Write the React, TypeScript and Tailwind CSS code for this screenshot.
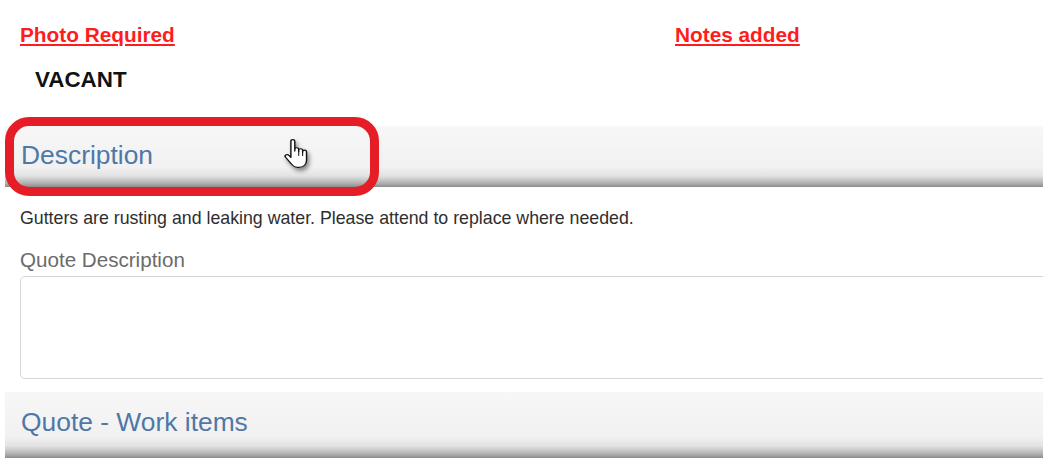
import React from 'react';

const bandBg =
  'bg-[linear-gradient(to_bottom,#f7f7f8_0%,#f1f1f2_68%,#e2e2e3_82%,#b4b4b4_93%,#8c8c8c_100%)]';

function HandCursor() {
  return (
    <svg
      width="32"
      height="33"
      viewBox="0 0 18 23"
      preserveAspectRatio="none"
      className="drop-shadow-[2px_3px_2px_rgba(0,0,0,0.45)]"
    >
      <path
        d="M5 12.5V2.2a1.1 1.1 0 0 1 2.2 0V9V7.9a1.1 1.1 0 0 1 2.2 0V9.4V8.6a1.1 1.1 0 0 1 2.2 0V10V9.5a1.1 1.1 0 0 1 2.2 0V15.5c0 3-1.8 5-4.6 5H9.3c-1.9 0-3-0.9-4-2.4L2 13.4a1.1 1.1 0 0 1 1.7-1.4L5 13.5Z"
        fill="#fff"
        stroke="#111"
        strokeWidth="0.8"
        strokeLinejoin="round"
      />
      <path d="M9.4 9.4v3M11.6 10v2.6" stroke="#111" strokeWidth="0.6" />
    </svg>
  );
}

export default function App() {
  return (
    <div className="relative h-[458px] w-full overflow-hidden bg-white font-['Liberation_Sans',Arial,sans-serif]">
      <div className="flex px-5 pt-[25px] text-[20.8px] font-bold leading-none text-[#ff1c1c] underline underline-offset-2">
        <span className="w-[655px]">Photo Required</span>
        <span>Notes added</span>
      </div>

      <div className="mt-[23.5px] pl-[35px] text-[22.4px] font-bold leading-none text-[#111]">VACANT</div>

      <div className={`ml-[5px] mt-[34px] h-[61px] pl-4 pt-[16px] ${bandBg}`}>
        <h2 className="text-[26.4px] leading-none text-[#4f78a6]">Description</h2>
      </div>

      <p className="mt-[23px] pl-5 text-[17.75px] leading-none text-[#2e2e2e]">
        Gutters are rusting and leaking water. Please attend to replace where needed.
      </p>

      <div className="mt-[23px] pl-5 text-[20.6px] leading-none text-[#6b6b6b]">Quote Description</div>

      <div className="ml-5 mr-[-20px] mt-[5px] h-[103px] rounded-[5px] border border-[#d6d6d6] bg-white" />

      <div className={`ml-[5px] mt-[13px] h-[66px] pl-4 pt-[17px] ${bandBg}`}>
        <h2 className="text-[26.4px] leading-none text-[#4f78a6]">Quote - Work items</h2>
      </div>

      <div className="absolute left-[5px] top-[117px] h-[79px] w-[374px] rounded-[24px] border-[9px] border-[#e51d26]" />

      <div className="absolute left-[282px] top-[138px]">
        <HandCursor />
      </div>
    </div>
  );
}
